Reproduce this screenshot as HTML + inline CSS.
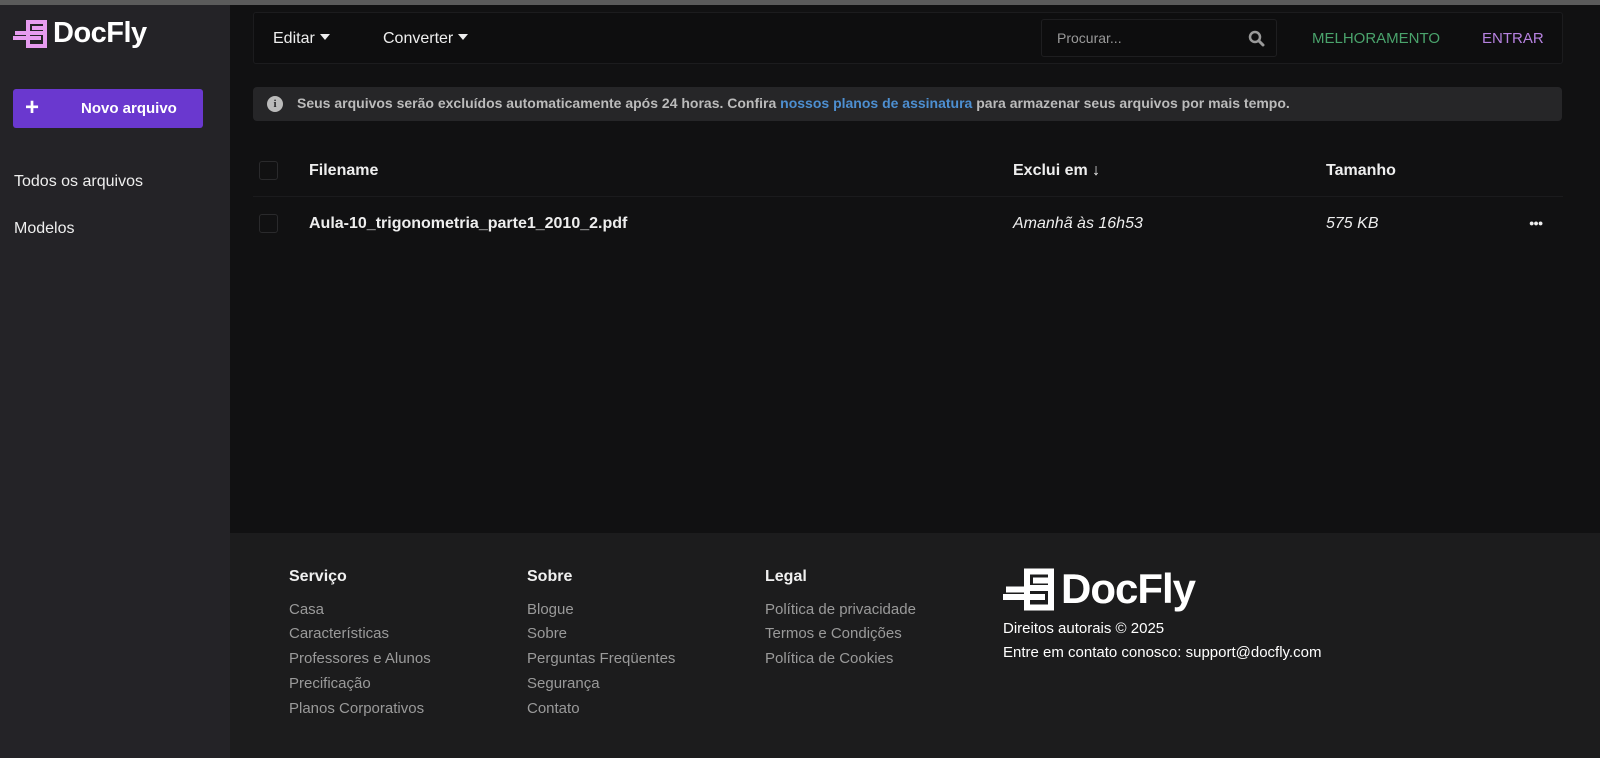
<!DOCTYPE html>
<html><head><meta charset="utf-8"><style>
*{margin:0;padding:0;box-sizing:border-box}
body{width:1600px;height:758px;overflow:hidden;background:#111112;font-family:"Liberation Sans",sans-serif;color:#e6e6e6;position:relative}
.top{position:absolute;left:0;top:0;width:1600px;height:5px;background:#5b5b5b}
.side{position:absolute;left:0;top:5px;width:230px;height:753px;background:#242327}
.logo{position:absolute;left:13px;top:22px;display:flex;align-items:center}
.logo span{font-weight:bold;font-size:29px;color:#fff;margin-left:4px;letter-spacing:-0.5px}
.btn{position:absolute;left:13px;top:89px;width:190px;height:39px;background:#6a38cf;border-radius:3px;color:#fff;font-weight:bold;font-size:15px}
.btn .pl{position:absolute;left:12px;top:5px;font-size:24px}
.btn .t{position:absolute;left:68px;top:11px}
.nav{position:absolute;left:14px;font-size:16px;color:#eee}
.main{position:absolute;left:230px;top:5px;width:1370px;height:528px;background:#111112}
.bar{position:absolute;left:253px;top:12px;width:1310px;height:52px;background:#0e0e0f;border:1px solid #1c1c1e;border-radius:3px}
.bar .m{position:absolute;top:17px;font-size:16px;color:#eee}
.tri{display:inline-block;width:0;height:0;border-left:5px solid transparent;border-right:5px solid transparent;border-top:6px solid #eee;vertical-align:3px;margin-left:5px}
.search{position:absolute;left:1041px;top:19px;width:236px;height:38px;border:1px solid #1e1e20;background:#0d0d0e;border-radius:3px}
.search span{position:absolute;left:15px;top:10px;font-size:14px;color:#999}
.info{position:absolute;left:253px;top:87px;width:1309px;height:34px;background:#262628;border-radius:4px;font-size:14px;font-weight:bold;color:#bbb}
.info .i{position:absolute;left:14px;top:9px;width:16px;height:16px;border-radius:50%;background:#bbb;color:#262628;font-size:11px;text-align:center;line-height:16px;font-family:"Liberation Serif",serif}
.info .tx{position:absolute;left:44px;top:8px;white-space:nowrap}
.info a{color:#4d8fd1;text-decoration:none}
.cb{position:absolute;left:259px;width:19px;height:19px;border:1px solid #2a2a2c;border-radius:3px}
.th{position:absolute;font-size:16px;font-weight:bold;color:#eee}
.td{position:absolute;font-size:16px;color:#eee}
.hr{position:absolute;left:253px;top:196px;width:1310px;height:1px;background:#1b1b1d}
.foot{position:absolute;left:230px;top:533px;width:1370px;height:225px;background:#1c1c1d}
.col{position:absolute;top:565px;font-size:15px;color:#9a9a9a;line-height:24.7px}
.col b{display:block;color:#f0f0f0;font-size:16px;margin-bottom:8px}
.copy{position:absolute;left:1003px;top:617px;font-size:15px;color:#fff;line-height:24px}
</style></head><body>
<div class="top"></div>
<div class="side">
</div>
<div class="logo" style="top:17px">
<svg width="36" height="32" viewBox="0 0 36 32"><rect x="13" y="2" width="21" height="28" fill="#e79cf0"/><rect x="17" y="6" width="13" height="20" fill="#242327"/><rect x="19" y="8" width="11" height="4" fill="#e79cf0"/><rect x="13" y="13" width="17" height="4" fill="#e79cf0"/><rect x="0" y="18" width="28" height="4" fill="#e79cf0"/><rect x="2" y="13" width="11" height="4" fill="#e79cf0"/></svg>
<span>DocFly</span></div>
<div class="btn"><span class="pl">+</span><span class="t">Novo arquivo</span></div>
<div class="nav" style="top:173px">Todos os arquivos</div>
<div class="nav" style="top:220px">Modelos</div>
<div class="main"></div>
<div class="bar">
<div class="m" style="left:19px">Editar<span class="tri"></span></div>
<div class="m" style="left:129px">Converter<span class="tri"></span></div>
<div class="m" style="left:1058px;color:#4aa36c;font-size:15px;top:17px">MELHORAMENTO</div>
<div class="m" style="left:1228px;color:#b682e0;font-size:15px;top:17px">ENTRAR</div>
</div>
<div class="search"><span>Procurar...</span>
<svg style="position:absolute;left:206px;top:10px" width="17" height="17" viewBox="0 0 17 17"><circle cx="7" cy="7" r="5" stroke="#999" stroke-width="2.5" fill="none"/><path d="M11 11l4 4" stroke="#999" stroke-width="3" stroke-linecap="round"/></svg></div>
<div class="info"><div class="i">i</div><div class="tx">Seus arquivos serão excluídos automaticamente após 24 horas. Confira <a>nossos planos de assinatura</a> para armazenar seus arquivos por mais tempo.</div></div>
<div class="cb" style="top:161px"></div>
<div class="th" style="left:309px;top:162px">Filename</div>
<div class="th" style="left:1013px;top:162px">Exclui em <span style="font-weight:bold">&#8595;</span></div>
<div class="th" style="left:1326px;top:162px">Tamanho</div>
<div class="hr"></div>
<div class="cb" style="top:214px"></div>
<div class="td" style="left:309px;top:215px;font-weight:bold">Aula-10_trigonometria_parte1_2010_2.pdf</div>
<div class="td" style="left:1013px;top:215px;font-style:italic">Amanhã às 16h53</div>
<div class="td" style="left:1326px;top:215px;font-style:italic">575 KB</div>
<div class="td" style="left:1529px;top:218px;font-size:9px;letter-spacing:-1px">&#9679;&#9679;&#9679;</div>
<div class="foot"></div>
<div class="col" style="left:289px"><b>Serviço</b>Casa<br>Características<br>Professores e Alunos<br>Precificação<br>Planos Corporativos</div>
<div class="col" style="left:527px"><b>Sobre</b>Blogue<br>Sobre<br>Perguntas Freqüentes<br>Segurança<br>Contato</div>
<div class="col" style="left:765px"><b>Legal</b>Política de privacidade<br>Termos e Condições<br>Política de Cookies</div>
<div style="position:absolute;left:1003px;top:565px;display:flex;align-items:center">
<svg width="54" height="45" viewBox="0 0 36 30"><rect x="14" y="1" width="20" height="28" fill="#fff"/><rect x="18" y="5" width="12" height="20" fill="#1c1c1d"/><rect x="20" y="7" width="10" height="4" fill="#fff"/><rect x="14" y="12" width="16" height="4" fill="#fff"/><rect x="0" y="18" width="28" height="4" fill="#fff"/><rect x="2" y="13" width="12" height="4" fill="#fff"/></svg>
<span style="font-weight:bold;font-size:42px;color:#fff;margin-left:4px;letter-spacing:-1px">DocFly</span></div>
<div class="copy">Direitos autorais © 2025<br>Entre em contato conosco: support@docfly.com</div>
</body></html>
